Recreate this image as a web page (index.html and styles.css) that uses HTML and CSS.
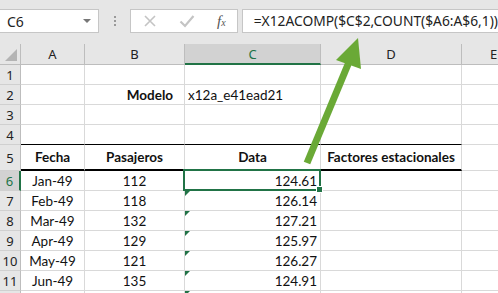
FILE: index.html
```html
<!DOCTYPE html>
<html lang="es">
<head>
    <title>Modelo X12</title>
    <link rel="stylesheet" href="styles.css">
</head>
<body>
    <div class="app">
        <div class="formula-bar">
            <div class="name-box">
                <span>C6</span>
                <span class="caret"></span>
            </div>
            <div class="grip"><i></i><i></i><i></i></div>
            <div class="fx-buttons">
                <svg width="14" height="14" viewBox="0 0 14 14"><path d="M2 2 L12 12 M12 2 L2 12" stroke="#c4c4c4" stroke-width="1.6" fill="none"/></svg>
                <svg width="16" height="14" viewBox="0 0 16 14"><path d="M1.5 7.5 L6 12 L14.5 2" stroke="#c4c4c4" stroke-width="2.2" fill="none"/></svg>
                <span class="fx">f<sub>x</sub></span>
            </div>
            <div class="formula">=X12ACOMP($C$2,COUNT($A6:A$6,1))</div>
        </div>

        <div class="sheet">
            <div class="hd corner"><span class="tri"></span></div>
            <div class="hd">A</div>
            <div class="hd">B</div>
            <div class="hd sel">C</div>
            <div class="hd">D</div>
            <div class="hd">E</div>

            <div class="rh">1</div>
            <div class="c"></div><div class="c"></div><div class="c"></div><div class="c"></div><div class="c"></div>

            <div class="rh">2</div>
            <div class="c"></div>
            <div class="c b right label">Modelo</div>
            <div class="c left">x12a_e41ead21</div>
            <div class="c"></div><div class="c"></div>

            <div class="rh">3</div>
            <div class="c"></div><div class="c"></div><div class="c"></div><div class="c"></div><div class="c"></div>

            <div class="rh">4</div>
            <div class="c top-line"></div><div class="c top-line"></div><div class="c top-line"></div><div class="c top-line"></div><div class="c"></div>

            <div class="rh tall">5</div>
            <div class="c b tall thick">Fecha</div>
            <div class="c b tall thick">Pasajeros</div>
            <div class="c b tall thick">Data</div>
            <div class="c b tall thick">Factores estacionales</div>
            <div class="c tall"></div>

            <div class="rh sel">6</div>
            <div class="c">Jan-49</div>
            <div class="c">112</div>
            <div class="c right active">124.61</div>
            <div class="c"></div><div class="c"></div>

            <div class="rh">7</div>
            <div class="c">Feb-49</div>
            <div class="c">118</div>
            <div class="c right flag">126.14</div>
            <div class="c"></div><div class="c"></div>

            <div class="rh">8</div>
            <div class="c">Mar-49</div>
            <div class="c">132</div>
            <div class="c right flag">127.21</div>
            <div class="c"></div><div class="c"></div>

            <div class="rh">9</div>
            <div class="c">Apr-49</div>
            <div class="c">129</div>
            <div class="c right flag">125.97</div>
            <div class="c"></div><div class="c"></div>

            <div class="rh">10</div>
            <div class="c">May-49</div>
            <div class="c">121</div>
            <div class="c right flag">126.27</div>
            <div class="c"></div><div class="c"></div>

            <div class="rh">11</div>
            <div class="c">Jun-49</div>
            <div class="c">135</div>
            <div class="c right flag">124.91</div>
            <div class="c"></div><div class="c"></div>

            <div class="rh"></div>
            <div class="c"></div>
            <div class="c"></div>
            <div class="c right flag"></div>
            <div class="c"></div><div class="c"></div>
        </div>

        <!-- flecha que señala la fórmula -->
        <svg class="arrow" width="498" height="293" viewBox="0 0 498 293">
            <line x1="307" y1="163" x2="349" y2="62" stroke="#6aa936" stroke-width="7"/>
            <polygon points="358,38 336,60 361,69" fill="#6aa936"/>
        </svg>
    </div>
</body>
</html>
```

FILE: styles.css
```css
body {
    margin: 0;
    background-color: #fff;
    font-family: Lato, "Liberation Sans", sans-serif;
    color: #111;
}

.app {
    position: relative;
    width: 498px;
    height: 293px;
    overflow: hidden;
}

/* barra de fórmulas */
.formula-bar {
    display: flex;
    align-items: center;
    height: 44px;
    box-sizing: border-box;
    background-color: #e6e6e6;
}

.name-box {
    display: flex;
    align-items: center;
    justify-content: space-between;
    width: 101px;
    height: 24px;
    margin-top: -2px;
    padding: 0 7px;
    box-sizing: border-box;
    background-color: #fff;
    border: 1px solid #c6c6c6;
    border-left: none;
    font-family: "Noto Sans", sans-serif;
    font-size: 14px;
    color: #222;
}

.caret {
    width: 0;
    height: 0;
    border-left: 4px solid transparent;
    border-right: 4px solid transparent;
    border-top: 4px solid #777;
}

.grip {
    display: flex;
    flex-direction: column;
    gap: 2px;
    width: 32px;
    align-items: center;
    margin-top: -2px;
}

.grip i {
    width: 2px;
    height: 2px;
    background-color: #999;
}

.fx-buttons {
    display: flex;
    align-items: center;
    justify-content: space-between;
    width: 109px;
    height: 24px;
    margin-top: -2px;
    padding: 0 11px 0 12px;
    box-sizing: border-box;
    background-color: #fff;
    border: 1px solid #c6c6c6;
}

.fx {
    font-family: "Liberation Serif", serif;
    font-style: italic;
    font-size: 15px;
    color: #555;
}

.fx sub {
    font-size: 10px;
    vertical-align: 0;
}

.formula {
    flex: 1;
    height: 24px;
    margin-top: -2px;
    margin-left: 4px;
    padding-left: 11px;
    box-sizing: border-box;
    background-color: #fff;
    border: 1px solid #c6c6c6;
    border-right: none;
    font-family: "Noto Sans", sans-serif;
    font-size: 13.8px;
    line-height: 22px;
    color: #222;
    white-space: nowrap;
}

/* hoja */
.sheet {
    display: grid;
    grid-template-columns: 21px 64px 100px 136px 141px 64px;
    grid-template-rows: 21px repeat(4, 20px) 26px repeat(7, 20px);
}

.hd, .rh {
    display: flex;
    align-items: center;
    justify-content: center;
    background-color: #e6e6e6;
    border-right: 1px solid #bdbdbd;
    border-bottom: 1px solid #bdbdbd;
    box-sizing: border-box;
    font-family: "Noto Sans", sans-serif;
    font-size: 13px;
    color: #222;
}

.rh {
    border-bottom-color: #d0d0d0;
}

.hd.sel {
    background-color: #d2d2d2;
    border-bottom: 2px solid #217346;
    color: #217346;
}

.rh.sel {
    background-color: #d2d2d2;
    border-right: 2px solid #217346;
    color: #217346;
}

.corner {
    position: relative;
}

.tri {
    position: absolute;
    right: 3px;
    bottom: 3px;
    width: 0;
    height: 0;
    border-left: 12px solid transparent;
    border-bottom: 12px solid #b4b4b4;
}

.c {
    position: relative;
    display: flex;
    align-items: center;
    justify-content: center;
    border-right: 1px solid #d9d9d9;
    border-bottom: 1px solid #d9d9d9;
    box-sizing: border-box;
    font-size: 13.5px;
    white-space: nowrap;
}

.c.right {
    justify-content: flex-end;
    padding-right: 3px;
}

.c.left {
    justify-content: flex-start;
    padding-left: 3px;
}

.c.label {
    padding-right: 11px;
}

.b {
    font-weight: bold;
}

.top-line {
    border-bottom-color: #000;
}

.thick {
    border-bottom: 2px solid #000;
}

.active::after {
    content: "";
    position: absolute;
    top: -2px;
    left: -2px;
    right: -1px;
    bottom: -1px;
    border: 2px solid #217346;
}

.active::before {
    content: "";
    position: absolute;
    right: -3px;
    bottom: -3px;
    width: 5px;
    height: 5px;
    background-color: #217346;
    border: 1px solid #fff;
    z-index: 1;
}

.flag::before {
    content: "";
    position: absolute;
    top: 0;
    left: 0;
    width: 0;
    height: 0;
    border-top: 5px solid #217346;
    border-right: 5px solid transparent;
}

.arrow {
    position: absolute;
    top: 0;
    left: 0;
    pointer-events: none;
}
```
